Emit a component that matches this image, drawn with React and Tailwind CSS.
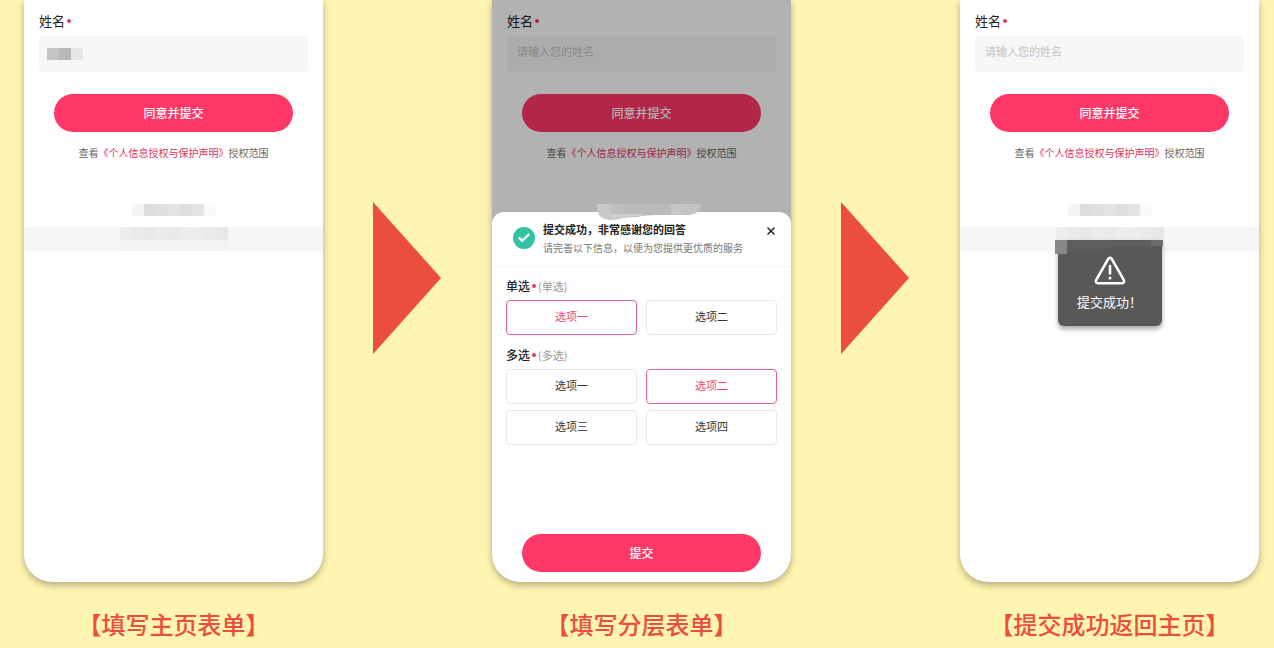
import React from 'react';
import { Check, X } from 'lucide-react';

const Tiles = ({ colors, className = '' }) => (
  <div className={`flex ${className}`} aria-hidden="true">
    {colors.map((color, i) => (
      <span key={i} className={`w-3 ${color}`}></span>
    ))}
  </div>
);

const Arrow = () => (
  <div className="w-[169px] shrink-0 flex pl-[50px] pt-[202px]">
    <svg width="68" height="152" viewBox="0 0 68 152" aria-hidden="true">
      <path d="M0 0L68 76L0 152Z" fill="#eb4e3e" />
    </svg>
  </div>
);

const Phone = ({ caption, children }) => (
  <figure className="flex-1 min-w-0 flex flex-col">
    <div className="relative flex-1 bg-white rounded-b-[28px] shadow-[0_3px_7px_rgba(0,0,0,0.3)]">{children}</div>
    <figcaption className="h-[66px] pt-[26px] text-center text-2xl leading-8 font-medium text-[#eb4e3e] whitespace-nowrap">
      {caption}
    </figcaption>
  </figure>
);

const Dot = () => <span className="w-1 h-1 rounded-full bg-[#f23560]"></span>;

const NameForm = ({ id, masked }) => (
  <form className="px-[15px] pt-3" onSubmit={(e) => e.preventDefault()}>
    <label htmlFor={id} className="flex items-center gap-0.5 text-[13px] leading-[18px] text-[#222]">
      姓名
      <Dot />
    </label>
    <div className="relative mt-1.5">
      <input
        id={id}
        type="text"
        placeholder={masked ? '' : '请输入您的姓名'}
        className="block w-full h-9 rounded-[3px] bg-[#f7f7f7] px-2.5 pb-1.5 text-[11px] text-[#333] placeholder:text-[#c4c4c4] outline-none"
      />
      {masked && (
        <Tiles className="absolute left-2 top-3 h-3" colors={['bg-[#c4c4c4]', 'bg-[#b9b9b9]', 'bg-[#e6e6e6]']} />
      )}
    </div>
    <div className="px-[15px] mt-[22px]">
      <button type="submit" className="block w-full h-[38px] rounded-full bg-[#ff3868] text-white text-xs font-medium">
        同意并提交
      </button>
    </div>
    <p className="mt-[13px] text-center text-[10px] leading-4 text-[#666] whitespace-nowrap">
      查看<a href="#privacy" className="text-[#d83566]">《个人信息授权与保护声明》</a>授权范围
    </p>
  </form>
);

const Footer = () => (
  <div className="mt-[43px]">
    <Tiles
      className="h-3 justify-center"
      colors={['bg-[#f5f5f5]', 'bg-[#dddde0]', 'bg-[#dfdfe2]', 'bg-[#e3e3e3]', 'bg-[#dedede]', 'bg-[#e4e4e6]', 'bg-[#fafafa]']}
    />
    <div className="mt-[11px] h-6 bg-[#f7f7f7] flex flex-col items-center">
      <Tiles
        className="h-[13px]"
        colors={['bg-[#ededed]', 'bg-[#eaeaea]', 'bg-[#e8e8e9]', 'bg-[#ebebeb]', 'bg-[#e9e9e9]', 'bg-[#ededed]', 'bg-[#ececec]', 'bg-[#eaeaea]', 'bg-[#e8e8e8]']}
      />
      <span className="w-[108px] h-[11px] bg-[#f3f3f3]"></span>
    </div>
  </div>
);

const Question = ({ title, type, options, selected }) => (
  <fieldset>
    <legend className="flex items-center gap-0.5 text-xs leading-[18px] font-medium text-[#222]">
      {title}
      <Dot />
      <span className="text-[11px] font-normal text-[#999]">({title})</span>
    </legend>
    <div className="mt-[5px] grid grid-cols-2 gap-x-[9px] gap-y-1.5">
      {options.map((option) => (
        <label key={option} className="relative cursor-pointer">
          <input type={type} name={type} defaultChecked={option === selected} className="sr-only peer" />
          <span className="flex items-center justify-center h-[35px] pb-0.5 rounded-[4px] border border-[#e9e9e9] text-[11px] text-[#333] peer-checked:border-[#e8628a] peer-checked:text-[#e8497a]">
            {option}
          </span>
        </label>
      ))}
    </div>
  </fieldset>
);

const Sheet = () => (
  <section className="absolute inset-x-0 bottom-0 top-[212px] flex flex-col bg-white rounded-t-[12px] rounded-b-[28px]">
    <svg className="absolute left-[105px] -top-2" width="105" height="17" viewBox="0 0 105 17" aria-hidden="true">
      <path d="M0 0H104Q103 11 89 11L60 11Q47 11 40 13Q25 13 17 16Q1 16 0 5Z" fill="#bababa" />
      <path d="M0 0H14V16Q1 14 0 5Z" fill="#c8c8c8" />
      <path d="M14 0H26V14L14 16Z" fill="#bfbfbf" />
      <path d="M14 10H45V12Q28 12 17 16H14Z" fill="#cfcfcf" />
      <path d="M74 0H86V11H74Z" fill="#c6c6c6" />
      <path d="M86 0H104Q103 11 89 11H86Z" fill="#c3c3c3" />
    </svg>
    <header className="flex items-start h-[55px] pt-2 pl-[21px] pr-3.5 border-b border-[#f5f5f5]">
      <span className="mt-[7px] w-[22px] h-[22px] rounded-full bg-[#30c3a3] text-white flex items-center justify-center">
        <Check size={14} strokeWidth={4} />
      </span>
      <div className="ml-2 flex-1 whitespace-nowrap">
        <h2 className="mt-px text-[11px] leading-4 font-bold text-[#222]">提交成功，非常感谢您的回答</h2>
        <p className="mt-[3px] text-[10px] leading-4 text-[#777]">请完善以下信息，以便为您提供更优质的服务</p>
      </div>
      <button type="button" aria-label="关闭" className="mt-[5px] text-[#222]">
        <X size={12} strokeWidth={3} />
      </button>
    </header>
    <form className="flex-1 flex flex-col px-3.5 pt-2.5 pb-2.5" onSubmit={(e) => e.preventDefault()}>
      <div className="flex flex-col gap-[11px]">
        <Question title="单选" type="radio" options={['选项一', '选项二']} selected="选项一" />
        <Question title="多选" type="checkbox" options={['选项一', '选项二', '选项三', '选项四']} selected="选项二" />
      </div>
      <div className="mt-auto px-4">
        <button type="submit" className="block w-full h-[38px] rounded-full bg-[#ff3868] text-white text-xs font-medium">
          提交
        </button>
      </div>
    </form>
  </section>
);

const Toast = () => (
  <div role="status" className="absolute top-[240px] left-1/2 -translate-x-1/2 w-[104px] h-[86px] rounded-b-md bg-[#585858] shadow-[0_3px_5px_rgba(0,0,0,0.35)] text-white flex flex-col items-center pt-4">
    <svg className="absolute -left-[3px] top-0" width="108" height="14" viewBox="0 0 108 14" aria-hidden="true">
      <path d="M0 0H108V6H72Q55 6 39 11H12V14H0Z" fill="#5e5e5e" />
      <path d="M0 0H12V14H0Z" fill="#878787" />
      <path d="M96 0H108V6H96Z" fill="#6c6c6c" />
    </svg>
    <svg className="relative" width="32" height="29" viewBox="0 0 32 29" fill="none" stroke="currentColor" strokeLinecap="round" strokeLinejoin="round" aria-hidden="true">
      <path d="M14.4 2.6Q16 .8 17.6 2.6L29.9 24.2Q30.8 27 28 27.2H4Q1.2 27 2.1 24.2Z" strokeWidth="2.6" />
      <path d="M16 10V17.5" strokeWidth="2.6" />
      <path d="M16 22V22.1" strokeWidth="3" />
    </svg>
    <p className="mt-2 text-[13px] leading-[18px]">提交成功！</p>
  </div>
);

const App = () => {
  return (
    <main className="min-h-screen flex pl-6 pr-[15px] bg-[#fff4b0] font-['Noto_Sans_CJK_SC',sans-serif]">
      <Phone caption="【填写主页表单】">
        <NameForm id="name-filled" masked />
        <Footer />
      </Phone>
      <Arrow />
      <Phone caption="【填写分层表单】">
        <NameForm id="name-covered" />
        <div className="absolute inset-0 rounded-b-[28px] bg-black/30"></div>
        <Sheet />
      </Phone>
      <Arrow />
      <Phone caption="【提交成功返回主页】">
        <NameForm id="name-empty" />
        <Footer />
        <Toast />
      </Phone>
    </main>
  );
};

export default App;
